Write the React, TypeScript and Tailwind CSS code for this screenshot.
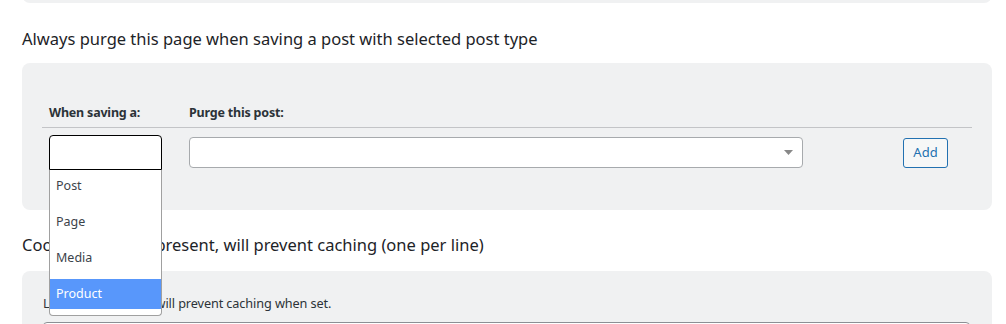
import React from "react";

export default function App() {
  const font = { fontFamily: '"Noto Sans", "Open Sans", sans-serif' };
  return (
    <div className="w-[1006px] h-[324px] overflow-hidden bg-white text-[#1d2327]" style={font}>
      <div className="ml-[22px] w-[970px]">
        <div className="h-[11px] -mt-[8px] rounded-b-[8px] bg-[#f0f1f2]" />
        <h2 className="mt-[26px] text-[16.5px] leading-[20px] font-normal">
          Always purge this page when saving a post with selected post type
        </h2>
        <div className="mt-[14px] h-[147px] rounded-[8px] bg-[#f0f1f2] px-[20px] pt-[37px]">
          <div className="flex h-[28px] items-center border-b border-[#c3c4c7] pl-[7px] text-[12.5px] font-bold text-[#2c3338] tracking-[-0.2px]">
            <div className="w-[140px]">When saving a:</div>
            <div>Purge this post:</div>
          </div>
          <div className="flex items-center pl-[7px] pt-[7px]">
            <div className="relative w-[113px]">
              <div className="h-[35px] rounded-t-[4px] border border-black bg-white" />
              <div className="absolute left-0 top-[35px] z-10 flex w-[113px] flex-col gap-[6px] rounded-b-[4px] border border-t-0 border-[#a0a0a0] bg-white pt-[1px] pb-[6px] text-[12.5px] text-[#3c434a]">
                <div className="flex h-[30px] items-center px-[6px]">Post</div>
                <div className="flex h-[30px] items-center px-[6px]">Page</div>
                <div className="flex h-[30px] items-center px-[6px]">Media</div>
                <div className="flex h-[30px] items-center bg-[#5897fb] px-[6px] text-white">Product</div>
              </div>
            </div>
            <div className="relative ml-[27px] flex h-[31px] w-[614px] items-center justify-end rounded-[4px] border border-[#a7aaad] bg-white pr-[9px]">
              <svg width="9" height="5" viewBox="0 0 9 5">
                <path d="M0 0h9L4.5 5z" fill="#888" />
              </svg>
            </div>
            <button className="ml-[100px] flex h-[30px] w-[45px] items-center justify-center rounded-[3px] border border-[#2271b1] bg-[#f6f7f7] text-[13px] text-[#2271b1]">
              Add
            </button>
          </div>
        </div>
        <h2 className="mt-[25px] text-[16.5px] leading-[20px] font-normal">
          Cookies which, if present, will prevent caching (one per line)
        </h2>
        <div className="mt-[16px] h-[80px] rounded-[8px] bg-[#f0f1f2] px-[21px] pt-[24px]">
          <p className="text-[12.7px] leading-[16px] text-[#2c3338] tracking-[-0.1px]">
            List of cookies that will prevent caching when set.
          </p>
          <div className="mt-[11px] h-[30px] w-[927px] rounded-[4px] border border-[#8c8f94] bg-white" />
        </div>
      </div>
    </div>
  );
}
